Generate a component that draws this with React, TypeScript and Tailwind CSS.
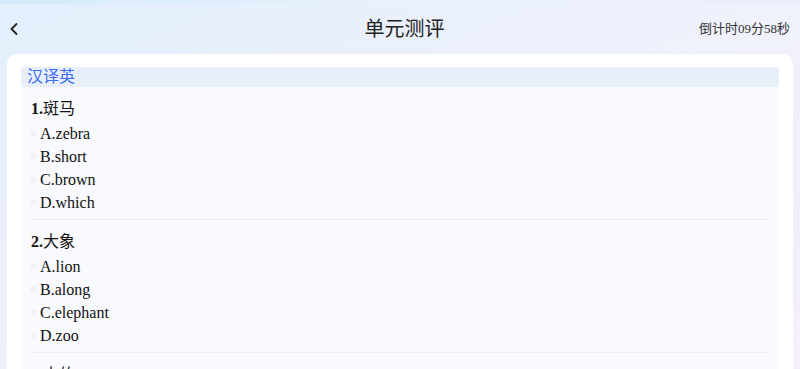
import { ChevronLeft } from "lucide-react";

const questions = [
  { no: 1, word: "斑马", options: ["A.zebra", "B.short", "C.brown", "D.which"] },
  { no: 2, word: "大象", options: ["A.lion", "B.along", "C.elephant", "D.zoo"] },
  { no: 3, word: "大的", options: ["A.big", "B.small", "C.tall", "D.long"] },
];

export default function App() {
  return (
    <div
      className="h-[369px] w-full overflow-hidden bg-gradient-to-br from-[#e2effc] via-[#eff1fb] to-[#f5effb] text-[#111]"
      style={{ fontFamily: '"Liberation Serif", "Noto Sans CJK SC", serif' }}
    >
      <div className="h-[4px] bg-gradient-to-r from-[#d6e9fa] via-[#e8f2fc] to-[#ebeefa]" />
      {/* header */}
      <div className="flex h-[50px] items-center justify-between px-[4px]">
        <ChevronLeft size={20} strokeWidth={2.2} className="text-[#222]" />
        <div className="ml-[86px] text-[20px] text-[#222]">单元测评</div>
        <div className="pr-[6px] text-[13px] text-[#333]">倒计时09分58秒</div>
      </div>

      {/* card */}
      <div className="mx-[7px] rounded-[10px] bg-white px-[14px] pt-[13px]">
        <div className="flex h-[20px] items-center rounded-[2px] bg-[#e9eff9] px-[6px] text-[16px] text-[#3a6df2]">
          汉译英
        </div>
        <div className="bg-[#f9fafd] px-[10px]">
          {questions.map((q) => (
            <div key={q.no} className="border-b border-[#eceef3] pb-[5px] pt-[10px]">
              <div className="mb-[1px] h-[24px] text-[16px] leading-[24px]">
                <span className="font-bold">{q.no}.</span>
                {q.word}
              </div>
              {q.options.map((o) => (
                <div key={o} className="flex h-[23px] items-center text-[16px]">
                  <span className="mr-[4px] h-[5px] w-[5px] rounded-full border border-[#e6e8ee]" />
                  {o}
                </div>
              ))}
            </div>
          ))}
        </div>
      </div>
    </div>
  );
}
